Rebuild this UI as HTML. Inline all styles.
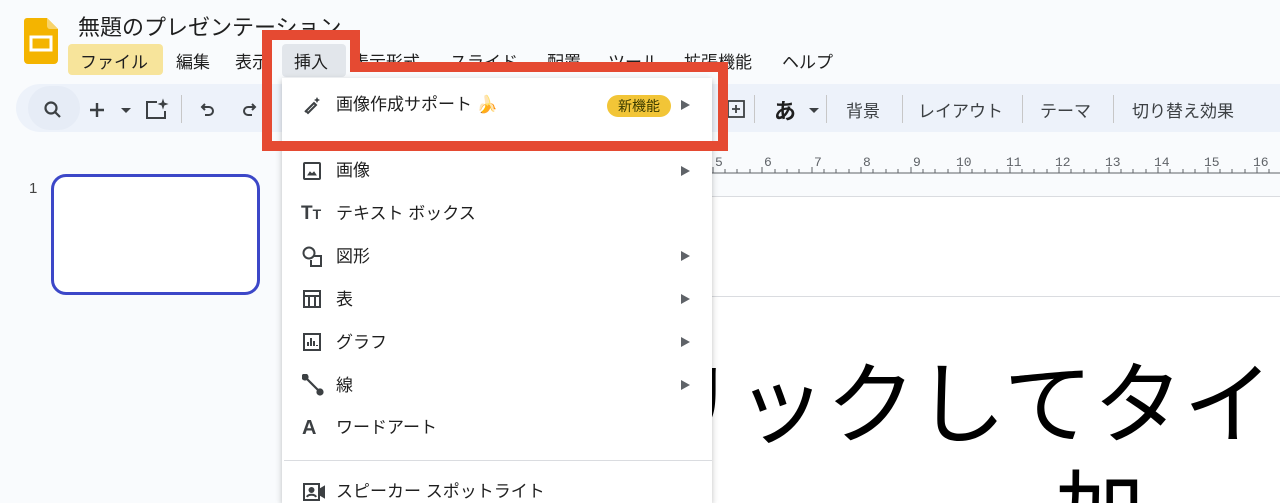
<!DOCTYPE html>
<html style="width:1280px;height:503px;overflow:hidden"><head><meta charset="utf-8">
<style>
*{margin:0;padding:0;box-sizing:border-box}
body{width:1280px;height:503px;overflow:hidden;background:#f9fbfd;font-family:"Liberation Sans","Noto Sans CJK JP",sans-serif;color:#1f1f1f;position:relative}
.a{position:absolute;white-space:nowrap}
.menu span{position:absolute;top:48px;font-size:17px;color:#1f1f1f}
.tb{font-size:17px;color:#3c4043;top:97px}
.sep{position:absolute;width:1px;height:28px;top:95px;background:#c7c7c7}
.mi{position:absolute;left:336px;font-size:17px;line-height:20px;color:#1f1f1f}
.arr{position:absolute;left:681px;width:0;height:0;border-left:9px solid #5f6368;border-top:5px solid transparent;border-bottom:5px solid transparent}
.ic{position:absolute;left:302px}
</style></head><body>
<svg class="a" style="left:24px;top:18px" width="34" height="46" viewBox="0 0 34 46"><path d="M3 0H23L34 11V42a4 4 0 0 1-4 4H4a4 4 0 0 1-4-4V3a3 3 0 0 1 3-3z" fill="#f4b400"/><path d="M23 0L34 11H26a3 3 0 0 1-3-3z" fill="#f8d36b"/><rect x="7" y="19" width="20" height="13" fill="none" stroke="#fff" stroke-width="3"/></svg>
<div class="a" style="left:78px;top:10px;font-size:22px;color:#1f1f1f">無題のプレゼンテーション</div>
<div class="a" style="left:68px;top:44px;width:95px;height:31px;background:#f7e49b;border-radius:4px"></div>
<div class="a" style="left:282px;top:44px;width:64px;height:33px;background:#e2e6eb;border-radius:4px"></div>
<div class="menu">
<span style="left:80px">ファイル</span><span style="left:176px">編集</span><span style="left:235px">表示</span><span style="left:294px">挿入</span><span style="left:352px">表示形式</span><span style="left:450px">スライド</span><span style="left:547px">配置</span><span style="left:608px">ツール</span><span style="left:684px">拡張機能</span><span style="left:782px">ヘルプ</span>
</div>
<div class="a" style="left:16px;top:84px;width:1264px;height:48px;background:#edf2fa;border-radius:24px 0 0 24px"></div>
<div class="a" style="left:28px;top:86px;width:52px;height:44px;background:#e6ecf6;border-radius:22px"></div>
<svg class="a" style="left:43px;top:100px" width="20" height="20" viewBox="0 0 20 20" fill="none" stroke="#3c4043" stroke-width="2.2"><circle cx="8" cy="8" r="5.5"/><path d="M12 12l5 5"/></svg>
<svg class="a" style="left:88px;top:101px" width="18" height="18" viewBox="0 0 18 18" stroke="#3c4043" stroke-width="2.4"><path d="M9 2v14M2 9h14"/></svg>
<div class="a" style="left:121px;top:108px;border-top:5px solid #3c4043;border-left:5px solid transparent;border-right:5px solid transparent"></div>
<svg class="a" style="left:145px;top:98px" width="24" height="22" viewBox="0 0 24 22" fill="none" stroke="#3c4043" stroke-width="2"><path d="M12 4H2v16h18v-7"/><path d="M18 2l1 3 3 1-3 1-1 3-1-3-3-1 3-1z" fill="#3c4043" stroke-width="1"/></svg>
<div class="sep" style="left:181px"></div>
<svg class="a" style="left:199px;top:101px" width="18" height="18" viewBox="0 0 18 18" fill="none" stroke="#3c4043" stroke-width="2"><path d="M6 3L3 6l3 3"/><path d="M3 6h7a4 4 0 0 1 0 8H6"/></svg>
<svg class="a" style="left:240px;top:101px" width="18" height="18" viewBox="0 0 18 18" fill="none" stroke="#3c4043" stroke-width="2"><path d="M12 3l3 3-3 3"/><path d="M15 6H8a4 4 0 0 0 0 8h4"/></svg>
<svg class="a" style="left:727px;top:100px" width="18" height="18" viewBox="0 0 18 18" fill="none" stroke="#3c4043" stroke-width="1.8"><rect x="1" y="1" width="16" height="16"/><path d="M9 5v8M5 9h8"/></svg>
<div class="sep" style="left:754px"></div>
<div class="a" style="left:774px;top:94px;font-size:22px;font-weight:bold;color:#1f1f1f">あ</div>
<div class="a" style="left:809px;top:108px;border-top:5px solid #3c4043;border-left:5px solid transparent;border-right:5px solid transparent"></div>
<div class="sep" style="left:826px"></div>
<div class="a tb" style="left:846px">背景</div>
<div class="sep" style="left:902px"></div>
<div class="a tb" style="left:918px">レイアウト</div>
<div class="sep" style="left:1022px"></div>
<div class="a tb" style="left:1040px">テーマ</div>
<div class="sep" style="left:1113px"></div>
<div class="a tb" style="left:1132px">切り替え効果</div>
<svg class="a" style="left:700px;top:148px" width="580" height="30" viewBox="0 0 580 30">
<line x1="12" y1="25" x2="580" y2="25" stroke="#5f6368" stroke-width="1"/>
<g stroke="#5f6368" stroke-width="1">
<path d="M13 25v-6M25 25v-4M37 25v-4M50 25v-4M62 25v-6M75 25v-4M87 25v-4M99 25v-4M112 25v-6M124 25v-4M136 25v-4M149 25v-4M161 25v-6M173 25v-4M186 25v-4M198 25v-4M211 25v-6M223 25v-4M235 25v-4M248 25v-4M260 25v-6M272 25v-4M285 25v-4M297 25v-4M310 25v-6M322 25v-4M334 25v-4M347 25v-4M359 25v-6M371 25v-4M384 25v-4M396 25v-4M409 25v-6M421 25v-4M433 25v-4M446 25v-4M458 25v-6M470 25v-4M483 25v-4M495 25v-4M508 25v-6M520 25v-4M532 25v-4M545 25v-4M557 25v-6M569 25v-4"/>
</g>
<g font-family="Liberation Mono,monospace" font-size="13" fill="#5f6368">
<text x="15" y="18">5</text><text x="64" y="18">6</text><text x="114" y="18">7</text><text x="163" y="18">8</text><text x="213" y="18">9</text><text x="256" y="18">10</text><text x="306" y="18">11</text><text x="355" y="18">12</text><text x="405" y="18">13</text><text x="454" y="18">14</text><text x="504" y="18">15</text><text x="553" y="18">16</text>
</g></svg>
<div class="a" style="left:710px;top:196px;width:570px;height:307px;background:#fff;border-top:1px solid #dadce0;overflow:hidden">
<div class="a" style="left:-154px;top:164px;font-size:90px;line-height:90px;color:#000">クリックしてタイ</div>
<div class="a" style="left:345px;top:272px;font-size:90px;line-height:90px;color:#000">加</div>
</div>
<div class="a" style="left:710px;top:296px;width:570px;height:1px;background:#dadce0"></div>
<div class="a" style="left:29px;top:180px;font-size:15px;color:#444">1</div>
<div class="a" style="left:51px;top:174px;width:209px;height:121px;border:3px solid #3c47c8;border-radius:15px;background:#fff"></div>
<div class="a" style="left:282px;top:78px;width:430px;height:425px;background:#fff;box-shadow:0 2px 6px rgba(0,0,0,.25)"></div>
<svg class="ic" style="top:95px" width="20" height="20" viewBox="0 0 20 20"><path d="M3 17l2-2 M4 16l8-8 2 2-8 8z" stroke="#3c4043" stroke-width="2" fill="none"/><path d="M15 2l1 2 2 1-2 1-1 2-1-2-2-1 2-1z" fill="#3c4043"/></svg>
<div class="mi" style="top:95px">画像作成サポート 🍌</div>
<div class="a" style="left:607px;top:95px;width:64px;height:22px;background:#f2c537;border-radius:11px;font-size:14px;text-align:center;line-height:22px;color:#3c3c00">新機能</div>
<div class="arr" style="top:100px"></div>
<svg class="ic" style="top:161px" width="20" height="20" viewBox="0 0 20 20" fill="none" stroke="#3c4043" stroke-width="2"><rect x="2" y="2" width="16" height="16" rx="1"/><path d="M6 14l2-3 2 2 2-2 2 3z" fill="#3c4043" stroke-width="1"/></svg>
<div class="mi" style="top:161px">画像</div><div class="arr" style="top:166px"></div>
<div class="a" style="left:301px;top:203px;font-size:19px;font-weight:bold;color:#3c4043">T<span style="font-size:14px">T</span></div>
<div class="mi" style="top:204px">テキスト ボックス</div>
<svg class="ic" style="top:246px" width="22" height="22" viewBox="0 0 22 22" fill="none" stroke="#3c4043" stroke-width="2"><circle cx="7" cy="7" r="5.5"/><path d="M12 10h7v10H9v-6"/></svg>
<div class="mi" style="top:247px">図形</div><div class="arr" style="top:251px"></div>
<svg class="ic" style="top:289px" width="20" height="20" viewBox="0 0 20 20" fill="none" stroke="#3c4043" stroke-width="2"><rect x="2" y="2" width="16" height="16"/><path d="M2 7h16M7 7v11M13 7v11"/></svg>
<div class="mi" style="top:290px">表</div><div class="arr" style="top:294px"></div>
<svg class="ic" style="top:332px" width="20" height="20" viewBox="0 0 20 20" fill="none" stroke="#3c4043" stroke-width="2"><rect x="2" y="2" width="16" height="16"/><path d="M6 14v-4M9 14V6M12 14v-5M15 14v-1"/></svg>
<div class="mi" style="top:333px">グラフ</div><div class="arr" style="top:337px"></div>
<svg class="ic" style="top:374px" width="22" height="22" viewBox="0 0 22 22" stroke="#3c4043" stroke-width="2.2" fill="#3c4043"><path d="M3 3l16 16"/><circle cx="3" cy="3" r="2.5"/><circle cx="18" cy="18" r="2.5"/></svg>
<div class="mi" style="top:376px">線</div><div class="arr" style="top:380px"></div>
<div class="a" style="left:302px;top:417px;font-size:20px;font-weight:bold;color:#3c4043">A</div>
<div class="mi" style="top:418px">ワードアート</div>
<div class="a" style="left:284px;top:460px;width:428px;height:1px;background:#dadce0"></div>
<svg class="ic" style="top:482px" width="24" height="20" viewBox="0 0 24 20" fill="none" stroke="#3c4043" stroke-width="2"><rect x="2" y="2" width="15" height="16"/><circle cx="9.5" cy="8" r="2" fill="#3c4043"/><path d="M5 15c1-3 8-3 9 0"/><path d="M17 8l5-3v10l-5-3" fill="#3c4043"/></svg>
<div class="mi" style="top:482px">スピーカー スポットライト</div>
<svg class="a" style="left:0;top:0" width="1280" height="503"><path d="M267 35H355V67H723V146H267Z" fill="none" stroke="#e54a32" stroke-width="10"/></svg>
</body></html>
